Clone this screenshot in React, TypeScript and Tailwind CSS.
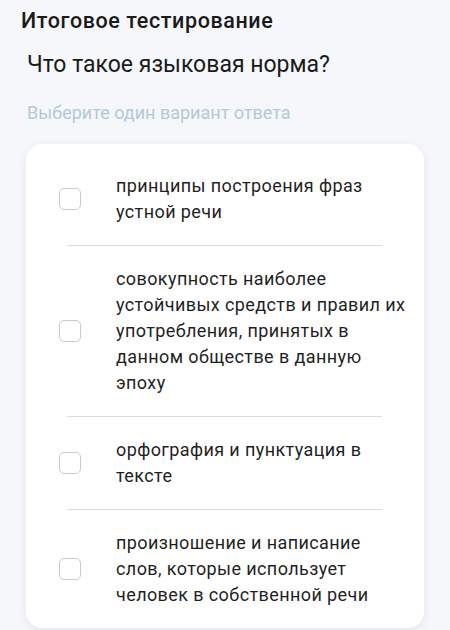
import { Fragment } from "react";

const answers = [
  "принципы построения фраз устной речи",
  "совокупность наиболее устойчивых средств и правил их употребления, принятых в данном обществе в данную эпоху",
  "орфография и пунктуация в тексте",
  "произношение и написание слов, которые использует человек в собственной речи",
];

function AnswerRow({ text }: { text: string }) {
  return (
    <label className="flex items-center gap-[35px] py-5 cursor-pointer">
      <span className="h-[22px] w-[22px] shrink-0 rounded-[5px] border-[1.5px] border-[#c9c9c9] bg-white" />
      <span className="w-[292px] text-[18px] leading-[26px] tracking-[0.4px] text-[#1f1f1f]">
        {text}
      </span>
    </label>
  );
}

export default function App() {
  return (
    <div
      className="min-h-[630px] w-[450px] overflow-hidden bg-[#f5f7fa]"
      style={{ fontFamily: "Roboto, 'Noto Sans', sans-serif" }}
    >
      <h1 className="pl-[21px] pt-[7px] text-[21.5px] font-medium leading-[28px] tracking-[0.6px] text-[#1a1a1a]">
        Итоговое тестирование
      </h1>
      <p className="mt-4 pl-[27px] text-[23px] leading-[28px] text-[#1a1a1a]">
        Что такое языковая норма?
      </p>
      <p className="mt-[22px] pl-[27px] text-[18px] leading-[24px] text-[#b3cad6]">
        Выберите один вариант ответа
      </p>

      <div className="ml-[26px] mt-[19px] w-[398px] rounded-2xl bg-white pl-[33px] pr-[8px] pt-[9px] shadow-[0_2px_10px_rgba(0,0,0,0.08)]">
        {answers.map((answer, index) => (
          <Fragment key={answer}>
            {index > 0 && <div className="ml-2 mr-[34px] h-px bg-[#dcdcdc]" />}
            <AnswerRow text={answer} />
          </Fragment>
        ))}
      </div>
    </div>
  );
}
